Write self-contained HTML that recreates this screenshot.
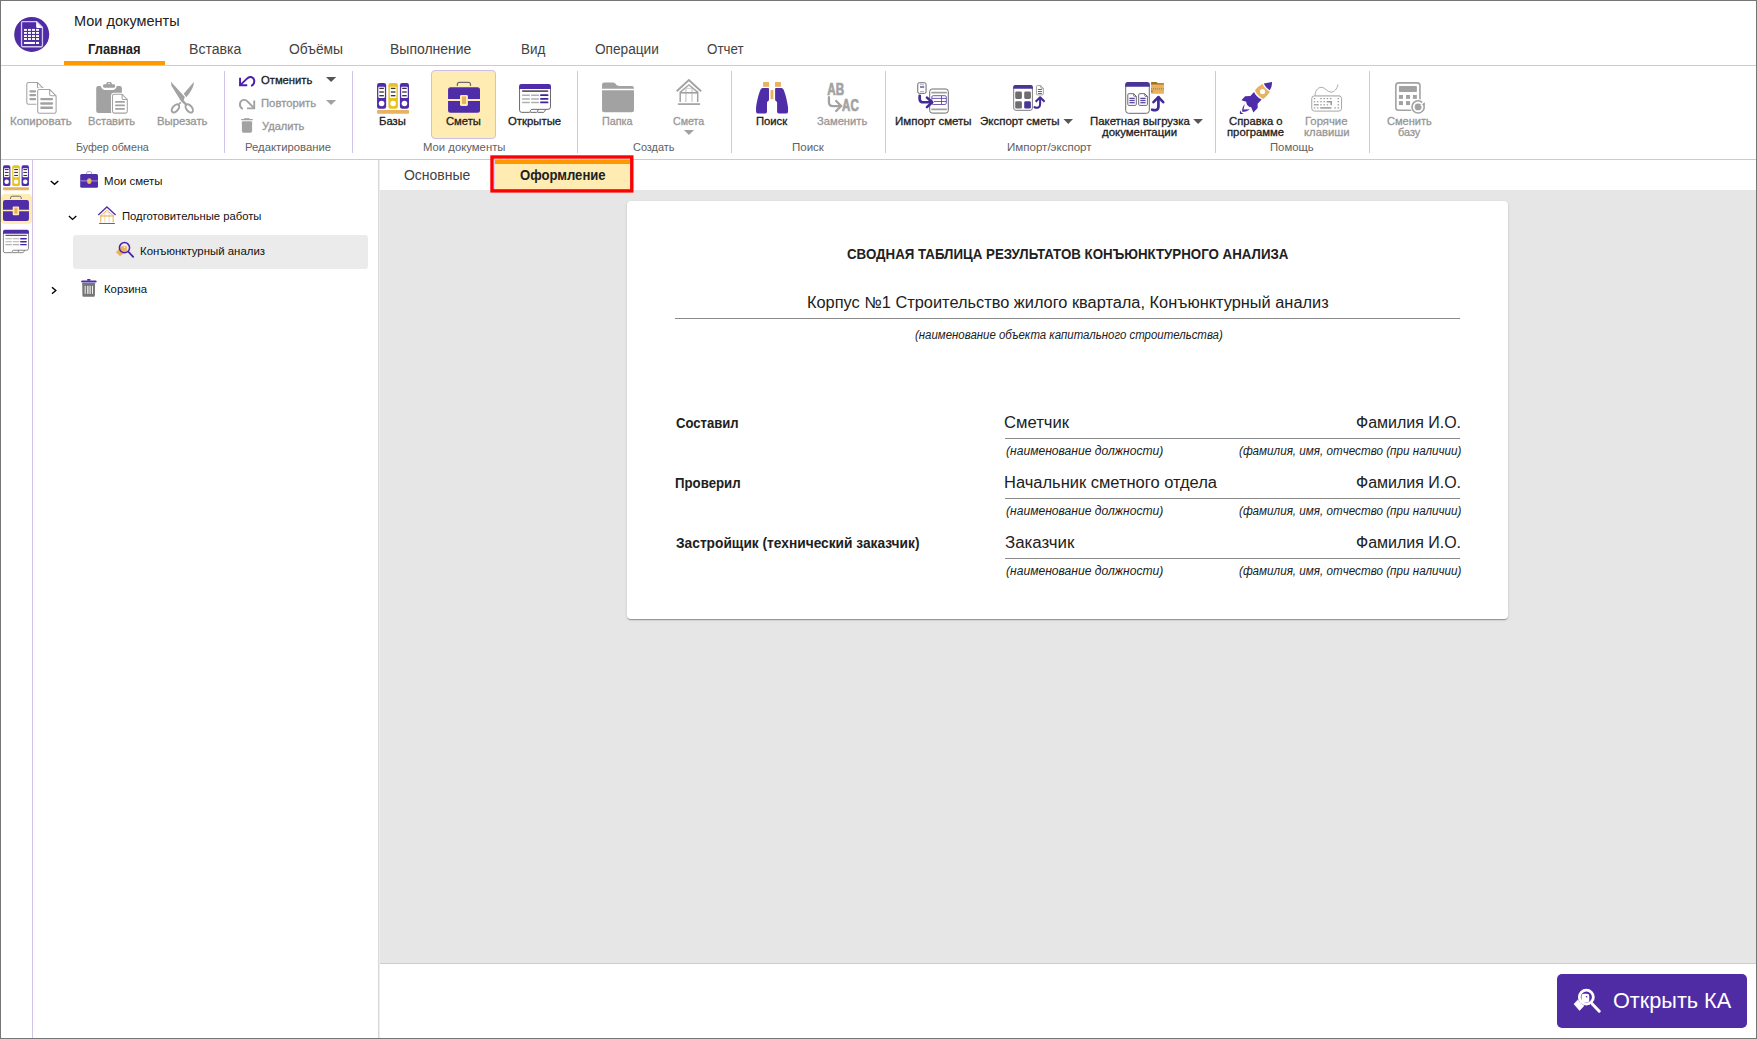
<!DOCTYPE html>
<html lang="ru"><head><meta charset="utf-8"><title>Мои документы</title><style>
html,body{margin:0;padding:0}
body{width:1757px;height:1039px;position:relative;overflow:hidden;background:#fff;font-family:"Liberation Sans",sans-serif;}
.a{position:absolute}
.layer{position:absolute;left:0;top:0;width:0;height:0}
.t{position:absolute;white-space:nowrap;line-height:1;transform-origin:0 0}
.m{-webkit-text-stroke:0.3px currentColor}
.hl{position:absolute;height:1px;background:#d1c4e9}
.vl{position:absolute;width:1px;background:#d1c4e9}
.ul{position:absolute;height:1px;background:#8a8a8a}
svg{position:absolute;left:0;top:0;overflow:visible}
button{position:absolute;border:0;padding:0;margin:0;font-family:inherit;text-align:left;overflow:visible}
.card{position:absolute;left:627px;top:201px;width:881px;height:418px;background:#fff;border-radius:4px;box-shadow:0 2px 1px -1px rgba(0,0,0,.2),0 1px 1px 0 rgba(0,0,0,.14),0 1px 3px 0 rgba(0,0,0,.12)}
</style></head><body>
<header class="layer titlebar">
<svg class="ic" width="1757" height="1039" viewBox="0 0 1757 1039"><circle cx="31.7" cy="34.45" r="17.5" fill="#4f2ca6"/><path d="M22.6,21.55 H36.7 L42.45,27.3 V45.6 Q42.45,46.75 41.3,46.75 H22.6 Q21.55,46.75 21.55,45.6 V22.7 Q21.55,21.55 22.6,21.55 Z" fill="none" stroke="#d3c9ec" stroke-width="1.3"/><path d="M36.2,21.6 L42.4,27.9 H37.2 Q36.2,27.9 36.2,26.9 Z" fill="#fff"/><rect x="23.98" y="28.94" width="2.96" height="1.9" fill="#fff"/><rect x="23.98" y="31.99" width="2.96" height="1.9" fill="#fff"/><rect x="23.98" y="35.08" width="2.96" height="1.9" fill="#fff"/><rect x="23.98" y="38.05" width="2.96" height="1.9" fill="#fff"/><rect x="28.0" y="28.94" width="2.96" height="1.9" fill="#fff"/><rect x="28.0" y="31.99" width="2.96" height="1.9" fill="#fff"/><rect x="28.0" y="35.08" width="2.96" height="1.9" fill="#fff"/><rect x="28.0" y="38.05" width="2.96" height="1.9" fill="#fff"/><rect x="32.02" y="28.94" width="2.96" height="1.9" fill="#fff"/><rect x="32.02" y="31.99" width="2.96" height="1.9" fill="#fff"/><rect x="32.02" y="35.08" width="2.96" height="1.9" fill="#fff"/><rect x="32.02" y="38.05" width="2.96" height="1.9" fill="#fff"/><rect x="36.05" y="28.94" width="2.96" height="1.9" fill="#fff"/><rect x="36.05" y="31.99" width="2.96" height="1.9" fill="#fff"/><rect x="36.05" y="35.08" width="2.96" height="1.9" fill="#fff"/><rect x="36.05" y="38.05" width="2.96" height="1.9" fill="#fff"/><rect x="23.98" y="41.95" width="11" height="2.05" fill="#fff"/><rect x="36.05" y="41.95" width="2.96" height="2.05" fill="#fff"/></svg>
<span class="t" style="left:74.26px;top:14px;font-size:14px;color:#212121;transform:scaleX(1.0356)">Мои документы</span>
</header>
<nav class="layer menu">
<div class="hl" style="left:1px;top:65px;width:1755px"></div>
<div class="a" style="left:64px;top:61px;width:101px;height:4px;background:#ff9900"></div>
<span class="t" style="left:88.48px;top:42px;font-size:14px;color:#212121;transform:scaleX(0.9236);font-weight:700">Главная</span>
<span class="t" style="left:189.39px;top:42px;font-size:14px;color:#424242;transform:scaleX(1.0078)">Вставка</span>
<span class="t" style="left:289.0px;top:42px;font-size:14px;color:#424242;transform:scaleX(0.9889)">Объёмы</span>
<span class="t" style="left:390.0px;top:42px;font-size:14px;color:#424242;transform:scaleX(0.9987)">Выполнение</span>
<span class="t" style="left:521.04px;top:42px;font-size:14px;color:#424242;transform:scaleX(0.96)">Вид</span>
<span class="t" style="left:595.2px;top:42px;font-size:14px;color:#424242;transform:scaleX(0.9754)">Операции</span>
<span class="t" style="left:706.5px;top:42px;font-size:14px;color:#424242;transform:scaleX(0.9538)">Отчет</span>
</nav>
<section class="layer ribbon">
<div class="hl" style="left:1px;top:159px;width:1755px"></div>
<div class="vl" style="left:224px;top:71px;height:82px"></div>
<div class="vl" style="left:352px;top:71px;height:82px"></div>
<div class="vl" style="left:577px;top:71px;height:82px"></div>
<div class="vl" style="left:731px;top:71px;height:82px"></div>
<div class="vl" style="left:885px;top:71px;height:82px"></div>
<div class="vl" style="left:1215px;top:71px;height:82px"></div>
<div class="vl" style="left:1369px;top:71px;height:82px"></div>
<div class="a" style="left:431px;top:70px;width:63px;height:67px;background:#ffecb3;border:1px solid #cdbfe8;border-radius:4px"></div>
<svg class="ic" width="1757" height="1039" viewBox="0 0 1757 1039"><path d="M28.6,82.55 H37.5 L43.1,88.15 V102.4 Q43.1,104.2 41.3,104.2 H28.6 Q26.8,104.2 26.8,102.4 V84.35 Q26.8,82.55 28.6,82.55 Z" fill="#fff" stroke="#a2a2a2" stroke-width="1.05" stroke-linejoin="round"/><path d="M37.5,82.55 V86.89 Q37.5,88.15 38.76,88.15 H43.1" fill="none" stroke="#a2a2a2" stroke-width="1.05"/><line x1="30.4" y1="91.3" x2="35.2" y2="91.3" stroke="#a2a2a2" stroke-width="2.2" stroke-linecap="round"/><line x1="30.4" y1="95.2" x2="35.2" y2="95.2" stroke="#a2a2a2" stroke-width="2.2" stroke-linecap="round"/><line x1="30.4" y1="99.1" x2="35.2" y2="99.1" stroke="#a2a2a2" stroke-width="2.2" stroke-linecap="round"/><path d="M39.5,89.4 H49.7 L56.1,95.8 V111.5 Q56.1,113.3 54.3,113.3 H39.5 Q37.7,113.3 37.7,111.5 V91.2 Q37.7,89.4 39.5,89.4 Z" fill="#fff" stroke="#fff" stroke-width="2.6" stroke-linejoin="round"/><path d="M49.7,89.4 V94.54 Q49.7,95.8 50.96,95.8 H56.1" fill="none" stroke="#fff" stroke-width="2.6"/><path d="M39.5,89.4 H49.7 L56.1,95.8 V111.5 Q56.1,113.3 54.3,113.3 H39.5 Q37.7,113.3 37.7,111.5 V91.2 Q37.7,89.4 39.5,89.4 Z" fill="#fff" stroke="#a2a2a2" stroke-width="1.05" stroke-linejoin="round"/><path d="M49.7,89.4 V94.54 Q49.7,95.8 50.96,95.8 H56.1" fill="none" stroke="#a2a2a2" stroke-width="1.05"/><line x1="41.4" y1="99.1" x2="51.9" y2="99.1" stroke="#a2a2a2" stroke-width="2.4" stroke-linecap="round"/><line x1="41.4" y1="103.5" x2="51.9" y2="103.5" stroke="#a2a2a2" stroke-width="2.4" stroke-linecap="round"/><line x1="41.4" y1="107.8" x2="51.9" y2="107.8" stroke="#a2a2a2" stroke-width="2.4" stroke-linecap="round"/>
<rect x="96.2" y="85.9" width="25.7" height="27" rx="2.2" fill="#a2a2a2"/><path d="M100.5,85.5 C101.91,89.34 103.13,89.95 105.55,89.95 L112.02,89.95 C114.65,89.95 115.66,89.34 117.07,85.5 Z" fill="#fff"/><path d="M104.34,84.29 L106.16,84.29 C106.56,82.06 107.17,81.98 108.99,81.98 C111.01,81.98 111.61,82.06 112.02,84.29 L113.84,84.29 Q115.25,84.29 115.25,85.9 Q115.25,87.72 113.84,87.72 L104.34,87.72 Q102.92,87.72 102.92,85.9 Q102.92,84.29 104.34,84.29 Z" fill="#a2a2a2"/><ellipse cx="109.07" cy="83.6" rx="1" ry="0.6" fill="#fff"/><path d="M114.3,94.3 H122.1 L127.3,99.5 V111.3 Q127.3,113.1 125.5,113.1 H114.3 Q112.5,113.1 112.5,111.3 V96.1 Q112.5,94.3 114.3,94.3 Z" fill="#fff" stroke="#fff" stroke-width="3.0" stroke-linejoin="round"/><path d="M122.1,94.3 V98.24 Q122.1,99.5 123.36,99.5 H127.3" fill="none" stroke="#fff" stroke-width="3.0"/><path d="M114.3,94.3 H122.1 L127.3,99.5 V111.3 Q127.3,113.1 125.5,113.1 H114.3 Q112.5,113.1 112.5,111.3 V96.1 Q112.5,94.3 114.3,94.3 Z" fill="#fff" stroke="#a2a2a2" stroke-width="1.05" stroke-linejoin="round"/><path d="M122.1,94.3 V98.24 Q122.1,99.5 123.36,99.5 H127.3" fill="none" stroke="#a2a2a2" stroke-width="1.05"/><line x1="115.9" y1="101.9" x2="124.1" y2="101.9" stroke="#a2a2a2" stroke-width="1.8" stroke-linecap="round"/><line x1="115.9" y1="105.4" x2="124.1" y2="105.4" stroke="#a2a2a2" stroke-width="1.8" stroke-linecap="round"/><line x1="115.9" y1="108.8" x2="124.1" y2="108.8" stroke="#a2a2a2" stroke-width="1.8" stroke-linecap="round"/>
<polygon points="170.94,81.86 184.85,97.1 183.64,100.17 187.07,103.89 185.25,105.18 181.01,101.14 171.43,85.7" fill="#a2a2a2"/><path d="M193.82,81.98 C194.35,85.3 190.91,92.17 186.26,97.34 L183.76,93.66 Z" fill="#a2a2a2"/><line x1="178.78" y1="104.09" x2="180.89" y2="102.48" stroke="#a2a2a2" stroke-width="1.6"/><ellipse cx="175.43" cy="108.42" rx="4.75" ry="2.8" transform="rotate(-50 175.43 108.42)" fill="none" stroke="#a2a2a2" stroke-width="2.0"/><ellipse cx="189.21" cy="108.42" rx="4.75" ry="2.8" transform="rotate(52 189.21 108.42)" fill="none" stroke="#a2a2a2" stroke-width="2.0"/>
<path d="M240.04,77.76 L240.04,85.26 L247.22,85.26" fill="none" stroke="#4a1fb0" stroke-width="1.9" stroke-linecap="butt"/><path d="M240.23,85.07 L246.71,78.9 C249.26,76.04 253.07,76.36 254.22,80.17 C254.66,82.71 253.39,84.62 251.8,85.58" fill="none" stroke="#4a1fb0" stroke-width="1.9" stroke-linecap="round"/>
<path d="M254.22,100.39 L254.22,108.33 L247.03,108.33" fill="none" stroke="#a2a2a2" stroke-width="1.9"/><path d="M254.03,108.14 L247.67,101.6 C245.44,98.93 241.31,99.24 240.04,103.06 C239.59,105.6 240.36,107.51 242.14,108.59" fill="none" stroke="#a2a2a2" stroke-width="1.9" stroke-linecap="round"/>
<rect x="241.9" y="121.5" width="10.2" height="11.2" rx="1.6" fill="#a2a2a2"/><rect x="241.9" y="121.5" width="10.2" height="3" fill="#a2a2a2"/><line x1="241.2" y1="119.6" x2="252.8" y2="119.6" stroke="#a2a2a2" stroke-width="1.3" stroke-linecap="butt"/><line x1="244.2" y1="118.7" x2="249.6" y2="118.7" stroke="#a2a2a2" stroke-width="1.0" stroke-linecap="butt"/>
<polygon points="326,77 336.2,77 331.1,82" fill="#555"/>
<polygon points="326,100 336.2,100 331.1,105" fill="#a2a2a2"/>
<g transform="translate(0 0) scale(1)"><rect x="377.05" y="83.05" width="9.1" height="25.65" rx="2.3" fill="#4f2da8"/><rect x="378.3" y="86.7" width="6.6" height="11.3" rx="1" fill="#fff"/><line x1="379.3" y1="88.4" x2="383.9" y2="88.4" stroke="#3a3a3a" stroke-width="1.35" stroke-linecap="butt"/><line x1="379.3" y1="92" x2="383.9" y2="92" stroke="#3a3a3a" stroke-width="1.35" stroke-linecap="butt"/><line x1="379.3" y1="95.7" x2="383.9" y2="95.7" stroke="#3a3a3a" stroke-width="1.35" stroke-linecap="butt"/><circle cx="381.6" cy="103.5" r="2.8" fill="#fff"/><rect x="388.4" y="83.05" width="9.5" height="25.65" rx="2.3" fill="#eac21f"/><rect x="389.85" y="86.7" width="6.6" height="11.3" rx="1" fill="#fff"/><line x1="390.85" y1="88.4" x2="395.45" y2="88.4" stroke="#3a3a3a" stroke-width="1.35" stroke-linecap="butt"/><line x1="390.85" y1="92" x2="395.45" y2="92" stroke="#3a3a3a" stroke-width="1.35" stroke-linecap="butt"/><line x1="390.85" y1="95.7" x2="395.45" y2="95.7" stroke="#3a3a3a" stroke-width="1.35" stroke-linecap="butt"/><circle cx="393.15" cy="103.5" r="2.8" fill="#fff"/><rect x="399.9" y="83.05" width="9.1" height="25.65" rx="2.3" fill="#4f2da8"/><rect x="401.15" y="86.7" width="6.6" height="11.3" rx="1" fill="#fff"/><line x1="402.15" y1="88.4" x2="406.75" y2="88.4" stroke="#3a3a3a" stroke-width="1.35" stroke-linecap="butt"/><line x1="402.15" y1="92" x2="406.75" y2="92" stroke="#3a3a3a" stroke-width="1.35" stroke-linecap="butt"/><line x1="402.15" y1="95.7" x2="406.75" y2="95.7" stroke="#3a3a3a" stroke-width="1.35" stroke-linecap="butt"/><circle cx="404.45" cy="103.5" r="2.8" fill="#fff"/><rect x="377.05" y="110.1" width="31.95" height="3.7" rx="0.8" fill="#e8b25e"/></g>
<g transform="translate(0 0) scale(1)"><path d="M457.35,85.9 V84.4 Q457.35,82.4 459.35,82.4 H468.5 Q470.5,82.4 470.5,84.4 V85.9" fill="none" stroke="#6b6b6b" stroke-width="1.2"/><path d="M450.55,87.2 H477.5 Q480,87.2 480,89.7 V99 H448.05 V89.7 Q448.05,87.2 450.55,87.2 Z" fill="#4f2da8"/><path d="M448.05,101.05 H480 V110.35 Q480,112.85 477.5,112.85 H450.55 Q448.05,112.85 448.05,110.35 Z" fill="#4f2da8"/><rect x="460" y="95" width="7.9" height="10.9" rx="1.3" fill="#ffecb3"/><rect x="462" y="96.4" width="4" height="7.5" fill="#e8b25e"/></g>
<g transform="translate(0 0) scale(1)"><path d="M519.55,88 V110.2 Q519.55,112.35 521.7,112.35 H529.2 Q530.1,112.35 530.3,111.4 L530.6,110.3 Q530.9,109.35 532,109.35 H548 Q550.5,109.35 550.5,106.9 V88" fill="#fff" stroke="#6a6a6a" stroke-width="1"/><path d="M530.4,112.35 H536.4 Q537.2,112.35 537.5,111.5 L538.3,109.35 M537.6,112.35 H543.3 Q544.2,112.35 544.6,111.5 L545.6,109.35" fill="none" stroke="#6a6a6a" stroke-width="1"/><path d="M519.05,88.9 V86.3 Q519.05,84.06 521.3,84.06 H548.75 Q551,84.06 551,86.3 V88.9 Z" fill="#4f2da8"/><line x1="522.7" y1="91.1" x2="547.6" y2="91.1" stroke="#5c5c5c" stroke-width="1.6" stroke-linecap="round"/><line x1="522.6" y1="95.2" x2="529.3" y2="95.2" stroke="#b0b0b0" stroke-width="1.5" stroke-linecap="round"/><line x1="531.7" y1="95.2" x2="538.4" y2="95.2" stroke="#b0b0b0" stroke-width="1.5" stroke-linecap="round"/><line x1="540.9" y1="95.2" x2="547.6" y2="95.2" stroke="#4322a0" stroke-width="1.7" stroke-linecap="round"/><line x1="522.6" y1="98.9" x2="529.3" y2="98.9" stroke="#b0b0b0" stroke-width="1.5" stroke-linecap="round"/><line x1="531.7" y1="98.9" x2="538.4" y2="98.9" stroke="#b0b0b0" stroke-width="1.5" stroke-linecap="round"/><line x1="540.9" y1="98.9" x2="547.6" y2="98.9" stroke="#4322a0" stroke-width="1.7" stroke-linecap="round"/><line x1="522.6" y1="102.45" x2="529.3" y2="102.45" stroke="#b0b0b0" stroke-width="1.5" stroke-linecap="round"/><line x1="531.7" y1="102.45" x2="538.4" y2="102.45" stroke="#b0b0b0" stroke-width="1.5" stroke-linecap="round"/><line x1="540.9" y1="102.45" x2="547.6" y2="102.45" stroke="#4322a0" stroke-width="1.7" stroke-linecap="round"/></g>
<path d="M602.05,88.85 L602.05,84.29 Q602.05,82.39 604.07,82.39 L612.76,82.39 C616,82.39 615.59,85.9 619.64,85.9 L631.76,85.9 Q633.98,85.9 633.98,88.13 L633.98,88.85 Z" fill="#a2a2a2"/><path d="M602.05,90.35 L633.98,90.35 L633.98,110.16 Q633.98,112.18 631.96,112.18 L604.07,112.18 Q602.05,112.18 602.05,110.16 Z" fill="#a2a2a2"/>
<g transform="translate(0 0) scale(1)"><line x1="685.9" y1="89" x2="685.9" y2="101.9" stroke="#cfcfcf" stroke-width="1.4"/><line x1="692" y1="89" x2="692" y2="101.9" stroke="#cfcfcf" stroke-width="1.4"/><line x1="685.9" y1="88.3" x2="692" y2="88.3" stroke="#cfcfcf" stroke-width="1"/><polyline points="680.1,92.4 688.9,84.8 697.8,92.4" fill="none" stroke="#a2a2a2" stroke-width="1.4"/><line x1="680.1" y1="92.8" x2="697.9" y2="92.8" stroke="#a2a2a2" stroke-width="1.6"/><line x1="680.2" y1="91.8" x2="680.2" y2="101.9" stroke="#a2a2a2" stroke-width="1.5"/><line x1="697.7" y1="91.8" x2="697.7" y2="101.9" stroke="#a2a2a2" stroke-width="1.5"/><polyline points="676.7,91.3 688.85,80.0 701.1,91.3" fill="none" stroke="#a2a2a2" stroke-width="1.85"/><line x1="677.9" y1="104.1" x2="700.1" y2="104.1" stroke="#a2a2a2" stroke-width="1.7"/></g>
<polygon points="683.9,130 694,130 688.95,135" fill="#a2a2a2"/>
<rect x="763.1" y="82.06" width="5.9" height="4.75" fill="#e8b25e"/><rect x="775" y="82.06" width="5.9" height="4.75" fill="#e8b25e"/><rect x="770.5" y="89.9" width="2.9" height="9.3" rx="0.6" fill="#e8b25e"/><path d="M762.6,88.1 H768.2 Q769,88.1 769,88.9 V99.6 Q769,100.9 768,101.2 Q767,101.5 767,102.6 V111.4 Q767,113.6 764.8,113.6 H758.3 Q756.05,113.6 756.05,111.4 V107.5 C757.2,99 759.3,92.5 760.6,89.6 Q761.3,88.1 762.6,88.1 Z" fill="#4f2da8"/><g transform="translate(1544.1 0) scale(-1 1)"><path d="M762.6,88.1 H768.2 Q769,88.1 769,88.9 V99.6 Q769,100.9 768,101.2 Q767,101.5 767,102.6 V111.4 Q767,113.6 764.8,113.6 H758.3 Q756.05,113.6 756.05,111.4 V107.5 C757.2,99 759.3,92.5 760.6,89.6 Q761.3,88.1 762.6,88.1 Z" fill="#4f2da8"/></g>
<text x="827.3" y="94.5" font-family="Liberation Sans, sans-serif" font-weight="700" font-size="15.8" fill="#a2a2a2" stroke="#a2a2a2" stroke-width="0.7" textLength="16.8" lengthAdjust="spacingAndGlyphs">AB</text><text x="842.1" y="111.4" font-family="Liberation Sans, sans-serif" font-weight="700" font-size="15.8" fill="#a2a2a2" stroke="#a2a2a2" stroke-width="0.7" textLength="16.6" lengthAdjust="spacingAndGlyphs">AC</text><path d="M828.95,97.22 L828.95,102.27 Q828.95,106.11 832.91,106.11 L840.8,106.11" fill="none" stroke="#a2a2a2" stroke-width="2.3" stroke-linecap="round"/><path d="M836.15,101.06 L841.08,106.03 L836.15,110.96" fill="none" stroke="#a2a2a2" stroke-width="2.3" stroke-linecap="round" stroke-linejoin="miter"/>
<rect x="917.75" y="82.75" width="8.3" height="10.6" rx="1.5" fill="#fff" stroke="#6a6a6e" stroke-width="1"/><line x1="920" y1="84.7" x2="924" y2="84.7" stroke="#b0b0b0" stroke-width="0.9" stroke-linecap="butt"/><line x1="920" y1="87" x2="924.2" y2="87" stroke="#6a55b0" stroke-width="1.5" stroke-linecap="butt"/><line x1="920" y1="91.5" x2="924" y2="91.5" stroke="#b0b0b0" stroke-width="0.9" stroke-linecap="butt"/><rect x="929.7" y="89" width="18.6" height="24.1" rx="2.6" fill="#fff" stroke="#6a6a6e" stroke-width="1"/><line x1="931.5" y1="89.3" x2="946.3" y2="89.3" stroke="#b5b5b5" stroke-width="1.2" stroke-linecap="butt"/><line x1="932" y1="92.6" x2="946.2" y2="92.6" stroke="#a0a0a0" stroke-width="1.7" stroke-linecap="round"/><line x1="932" y1="109.35" x2="946.2" y2="109.35" stroke="#a0a0a0" stroke-width="1.7" stroke-linecap="round"/><rect x="931.8" y="95.7" width="14.5" height="8.8" rx="1.4" fill="none" stroke="#6247ae" stroke-width="0.9"/><path d="M931.8,98.4 H946.3 M934,101.5 H946.3 M941.5,95.7 V104.5" fill="none" stroke="#6247ae" stroke-width="0.9"/><path d="M919.68,95.81 L919.68,98.64 Q919.68,102.27 923.72,102.27 L931.81,102.27" fill="none" stroke="#432b96" stroke-width="2.7" stroke-linecap="round"/><path d="M926.96,97.62 L932.21,102.27 L926.96,107.12" fill="none" stroke="#432b96" stroke-width="2.6" stroke-linecap="round" stroke-linejoin="round"/>
<rect x="1013.7" y="85.6" width="18.7" height="24.7" rx="2.2" fill="#fff" stroke="#7a7a7a" stroke-width="1"/><path d="M1013.2,88.7 V87.3 Q1013.2,85.1 1015.4,85.1 H1030.7 Q1032.9,85.1 1032.9,87.3 V88.7 Z" fill="#4a3596"/><rect x="1015.2" y="91.6" width="6.7" height="7.3" rx="1.4" fill="#6e6b72"/><rect x="1024.2" y="91.6" width="6.7" height="7.3" rx="1.4" fill="#6e6b72"/><rect x="1015.2" y="101.3" width="6.7" height="7.3" rx="1.4" fill="#6e6b72"/><rect x="1024.2" y="101.3" width="6.7" height="7.3" rx="1.4" fill="#4a3596"/><path d="M1037.4,85.6 H1040.7 L1043.3,88.2 V93.9 Q1043.3,94.9 1042.3,94.9 H1037.4 Q1036.4,94.9 1036.4,93.9 V86.6 Q1036.4,85.6 1037.4,85.6 Z" fill="#fff" stroke="#a0a0a0" stroke-width="1.0" stroke-linejoin="round"/><path d="M1040.7,85.6 V87.5 Q1040.7,88.2 1041.4,88.2 H1043.3" fill="none" stroke="#a0a0a0" stroke-width="1.0"/><line x1="1037.9" y1="89.5" x2="1041.9" y2="89.5" stroke="#6a55b0" stroke-width="1.0" stroke-linecap="butt"/><line x1="1037.9" y1="91.5" x2="1041.9" y2="91.5" stroke="#6a55b0" stroke-width="1.0" stroke-linecap="butt"/><line x1="1037.9" y1="93.4" x2="1041.9" y2="93.4" stroke="#6a55b0" stroke-width="1.0" stroke-linecap="butt"/><path d="M1034.48,107.2 C1037.1,108.34 1040.13,107.93 1040.13,103.89 L1040.13,98.03" fill="none" stroke="#432b96" stroke-width="2.1" stroke-linecap="round"/><path d="M1035.69,101.67 L1040.13,97.34 L1044.58,101.67" fill="none" stroke="#432b96" stroke-width="2.1" stroke-linecap="butt" stroke-linejoin="round"/>
<polygon points="1063.5,119 1073,119 1068.25,124" fill="#555"/>
<rect x="1125.7" y="82.6" width="23.6" height="30.7" rx="2.8" fill="#fff" stroke="#6a6a6e" stroke-width="1"/><path d="M1125.2,86.7 V84.9 Q1125.2,82.07 1128,82.07 H1147 Q1149.8,82.07 1149.8,84.9 V86.7 Z" fill="#4a3596"/><path d="M1128.8,93.7 H1133.7 L1136.3,96.3 V104.4 Q1136.3,105.4 1135.3,105.4 H1128.8 Q1127.8,105.4 1127.8,104.4 V94.7 Q1127.8,93.7 1128.8,93.7 Z" fill="#fff" stroke="#6a6a6e" stroke-width="1.0" stroke-linejoin="round"/><path d="M1133.7,93.7 V95.6 Q1133.7,96.3 1134.4,96.3 H1136.3" fill="none" stroke="#6a6a6e" stroke-width="1.0"/><path d="M1139.7,93.7 H1144.8 L1147.4,96.3 V104.4 Q1147.4,105.4 1146.4,105.4 H1139.7 Q1138.7,105.4 1138.7,104.4 V94.7 Q1138.7,93.7 1139.7,93.7 Z" fill="#fff" stroke="#6a6a6e" stroke-width="1.0" stroke-linejoin="round"/><path d="M1144.8,93.7 V95.6 Q1144.8,96.3 1145.5,96.3 H1147.4" fill="none" stroke="#6a6a6e" stroke-width="1.0"/><line x1="1129.4" y1="98.4" x2="1134.7" y2="98.4" stroke="#5a45a4" stroke-width="1.3" stroke-linecap="butt"/><line x1="1140.3" y1="98.4" x2="1145.6" y2="98.4" stroke="#5a45a4" stroke-width="1.3" stroke-linecap="butt"/><line x1="1129.4" y1="100.5" x2="1134.7" y2="100.5" stroke="#5a45a4" stroke-width="1.3" stroke-linecap="butt"/><line x1="1140.3" y1="100.5" x2="1145.6" y2="100.5" stroke="#5a45a4" stroke-width="1.3" stroke-linecap="butt"/><line x1="1129.4" y1="102.7" x2="1134.7" y2="102.7" stroke="#5a45a4" stroke-width="1.3" stroke-linecap="butt"/><line x1="1140.3" y1="102.7" x2="1145.6" y2="102.7" stroke="#5a45a4" stroke-width="1.3" stroke-linecap="butt"/><path d="M1151.1,93.8 V83 Q1151.1,82.07 1152,82.07 H1156 Q1156.8,82.07 1157.2,82.7 L1157.6,83.2 H1163.9 V93.8 Z" fill="#e8b25e"/><path d="M1151.1,84.6 V83 Q1151.1,82.07 1152,82.07 H1156 Q1156.8,82.07 1157.2,82.7 L1157.6,83.2 H1163.9 V84.6 Z" fill="#9a7224"/><line x1="1151.1" y1="88.9" x2="1163.9" y2="88.9" stroke="#8a8172" stroke-width="1.1" stroke-dasharray="1 1"/><rect x="1151.1" y="90.3" width="1.6" height="2" fill="#8a8172"/><path d="M1152.15,109.64 C1155.18,110.78 1158.41,110.37 1158.41,106.13 L1158.41,97.63" fill="none" stroke="#432b96" stroke-width="2.7" stroke-linecap="round"/><path d="M1153.48,102.2 L1158.41,97.03 L1163.19,102.2" fill="none" stroke="#432b96" stroke-width="2.6" stroke-linecap="round" stroke-linejoin="round"/>
<polygon points="1193.2,119 1203,119 1198.1,124" fill="#555"/>
<path d="M1263.78,83.48 L1272.07,81.9 C1271.98,85.3 1271.38,87.72 1269.76,90.23 C1267.34,88.93 1265.32,86.51 1263.78,83.48 Z" fill="#4f2da8"/><path d="M1254.93,90.43 C1257.23,87.32 1259.66,85.3 1262.69,83.96 C1264.1,87.32 1266.53,89.95 1269.92,91.48 C1268.55,94.19 1266.12,97.02 1263.29,98.92 C1259.66,97.02 1256.83,94.19 1254.93,90.43 Z" fill="#e8b25e"/><circle cx="1262.49" cy="91.56" r="2.65" fill="#fff"/><path d="M1254,92.09 C1255.61,95.4 1258.44,98.23 1261.68,99.57 L1257.64,103.69 L1257.64,107.93 L1253.39,112.58 L1251.17,107.33 C1248.34,107.12 1246.32,105.1 1246.24,101.87 L1241.39,100.37 L1245.11,96.21 L1250.36,96.01 Z" fill="#4f2da8"/><path d="M1244.7,104.09 L1243.57,109.47 L1249.96,109.14 C1247.93,110.76 1244.7,111.97 1242.19,111.77 C1241.67,109.55 1243.08,105.91 1244.7,104.09 Z" fill="#4f2da8"/><path d="M1240.25,110.16 C1240.66,111.97 1241.87,113.19 1243.81,113.59 C1242.28,114.2 1240.66,114.2 1239.93,113.91 C1239.77,112.78 1239.85,111.17 1240.25,110.16 Z" fill="#4f2da8"/>
<rect x="1311.75" y="95.9" width="29.8" height="15.2" rx="2.6" fill="#fff" stroke="#a6a6a6" stroke-width="1"/><line x1="1314" y1="95.7" x2="1340" y2="95.7" stroke="#c4c4c4" stroke-width="1.2" stroke-linecap="butt"/><path d="M1315.09,95.6 C1315.09,89.34 1319.34,86.91 1322.17,87.32 C1325,87.72 1327.83,92.17 1331.06,92.17 C1334.29,92.17 1337.12,88.93 1337.93,84.57" fill="none" stroke="#a0a0a0" stroke-width="0.9"/><rect x="1313.75" y="98" width="1.5" height="1.2" fill="#9a9a9a"/><rect x="1320.25" y="98" width="1.5" height="1.2" fill="#9a9a9a"/><rect x="1323.45" y="98" width="1.5" height="1.2" fill="#9a9a9a"/><rect x="1326.65" y="98" width="1.5" height="1.2" fill="#9a9a9a"/><rect x="1329.95" y="98" width="1.5" height="1.2" fill="#9a9a9a"/><rect x="1337.55" y="98" width="1.5" height="1.2" fill="#9a9a9a"/><rect x="1313.75" y="101.1" width="1.5" height="1.2" fill="#9a9a9a"/><rect x="1316.95" y="101.1" width="1.5" height="1.2" fill="#9a9a9a"/><rect x="1320.25" y="101.1" width="1.5" height="1.2" fill="#9a9a9a"/><rect x="1323.45" y="101.1" width="1.5" height="1.2" fill="#9a9a9a"/><rect x="1337.55" y="101.1" width="1.5" height="1.2" fill="#9a9a9a"/><rect x="1320.25" y="104.2" width="1.5" height="1.2" fill="#9a9a9a"/><rect x="1323.45" y="104.2" width="1.5" height="1.2" fill="#9a9a9a"/><rect x="1326.65" y="104.2" width="1.5" height="1.2" fill="#9a9a9a"/><rect x="1337.55" y="104.2" width="1.5" height="1.2" fill="#9a9a9a"/><rect x="1313.75" y="107.3" width="1.5" height="1.2" fill="#9a9a9a"/><rect x="1316.95" y="107.3" width="1.5" height="1.2" fill="#9a9a9a"/><rect x="1334.35" y="107.3" width="1.5" height="1.2" fill="#9a9a9a"/><rect x="1337.55" y="107.3" width="1.5" height="1.2" fill="#9a9a9a"/><path d="M1326.6,101.7 H1331.2 V105.2" fill="none" stroke="#9a9a9a" stroke-width="1.5"/><line x1="1313.8" y1="104.8" x2="1318.8" y2="104.8" stroke="#9a9a9a" stroke-width="1.3" stroke-linecap="butt"/><line x1="1320.2" y1="107.9" x2="1331.4" y2="107.9" stroke="#9a9a9a" stroke-width="1.5" stroke-linecap="butt"/>
<rect x="1395.85" y="82.85" width="24.1" height="27.4" rx="2.8" fill="#fff" stroke="#a2a2a2" stroke-width="1.6"/><rect x="1398.9" y="86.1" width="18" height="5.9" rx="0.8" fill="#a2a2a2"/><rect x="1398.9" y="95" width="4.05" height="3.85" fill="#a2a2a2"/><rect x="1406" y="95" width="4.05" height="3.85" fill="#a2a2a2"/><rect x="1412.85" y="95" width="4.05" height="3.85" fill="#a2a2a2"/><rect x="1398.9" y="101.06" width="4.05" height="4" fill="#a2a2a2"/><rect x="1406" y="101.06" width="4.05" height="4" fill="#a2a2a2"/><circle cx="1418.1" cy="106.9" r="7.9" fill="#fff"/><circle cx="1418.1" cy="106.9" r="6.1" fill="#fff" stroke="#a2a2a2" stroke-width="1.6"/><circle cx="1418.1" cy="106.9" r="3.4" fill="#a2a2a2"/><path d="M1420.3,106.2 L1425,103.3 L1422.5,101.5 Z" fill="#fff"/><path d="M1421.7,104.6 L1424.9,102.3 L1424.9,105.6 Z" fill="#a2a2a2"/></svg>
<span class="t m" style="left:9.8px;top:116px;font-size:11px;color:#979797;transform:scaleX(1.0424)">Копировать</span>
<span class="t m" style="left:87.7px;top:116px;font-size:11px;color:#979797;transform:scaleX(1.0106)">Вставить</span>
<span class="t m" style="left:157.1px;top:116px;font-size:11px;color:#979797;transform:scaleX(1.0327)">Вырезать</span>
<span class="t" style="left:75.53px;top:142px;font-size:11px;color:#616161;transform:scaleX(0.9743)">Буфер обмена</span>
<span class="t m" style="left:261.1px;top:75px;font-size:11px;color:#212121;transform:scaleX(1.022)">Отменить</span>
<span class="t m" style="left:261.1px;top:98px;font-size:11px;color:#979797;transform:scaleX(1.0259)">Повторить</span>
<span class="t m" style="left:261.6px;top:121px;font-size:11px;color:#979797;transform:scaleX(1.0095)">Удалить</span>
<span class="t" style="left:245.17px;top:142px;font-size:11px;color:#616161;transform:scaleX(1.0277)">Редактирование</span>
<span class="t m" style="left:379.0px;top:116px;font-size:11px;color:#212121;transform:scaleX(1.0231)">Базы</span>
<span class="t m" style="left:446.2px;top:116px;font-size:11px;color:#212121;transform:scaleX(1.0206)">Сметы</span>
<span class="t m" style="left:507.5px;top:116px;font-size:11px;color:#212121;transform:scaleX(1.0327)">Открытые</span>
<span class="t" style="left:423.07px;top:142px;font-size:11px;color:#616161;transform:scaleX(1.0291)">Мои документы</span>
<span class="t m" style="left:601.8px;top:116px;font-size:11px;color:#979797;transform:scaleX(0.9813)">Папка</span>
<span class="t m" style="left:672.5px;top:116px;font-size:11px;color:#979797;transform:scaleX(0.9667)">Смета</span>
<span class="t" style="left:633.4px;top:142px;font-size:11px;color:#616161;transform:scaleX(0.9929)">Создать</span>
<span class="t m" style="left:755.6px;top:116px;font-size:11px;color:#212121;transform:scaleX(1.0226)">Поиск</span>
<span class="t m" style="left:817.1px;top:116px;font-size:11px;color:#979797;transform:scaleX(1.016)">Заменить</span>
<span class="t" style="left:792.15px;top:142px;font-size:11px;color:#616161;transform:scaleX(1.0467)">Поиск</span>
<span class="t m" style="left:894.7px;top:116px;font-size:11px;color:#212121;transform:scaleX(1.0452)">Импорт сметы</span>
<span class="t m" style="left:980.1px;top:116px;font-size:11px;color:#212121;transform:scaleX(1.0447)">Экспорт сметы</span>
<span class="t m" style="left:1089.6px;top:116px;font-size:11px;color:#212121;transform:scaleX(1.0351)">Пакетная выгрузка</span>
<span class="t m" style="left:1102.4px;top:127px;font-size:11px;color:#212121;transform:scaleX(1.0389)">документации</span>
<span class="t" style="left:1007.45px;top:142px;font-size:11px;color:#616161;transform:scaleX(1.05)">Импорт/экспорт</span>
<span class="t m" style="left:1228.9px;top:116px;font-size:11px;color:#212121;transform:scaleX(1.0231)">Справка о</span>
<span class="t m" style="left:1226.6px;top:127px;font-size:11px;color:#212121;transform:scaleX(1.025)">программе</span>
<span class="t m" style="left:1305.4px;top:116px;font-size:11px;color:#979797;transform:scaleX(1.0293)">Горячие</span>
<span class="t m" style="left:1304.0px;top:127px;font-size:11px;color:#979797;transform:scaleX(1.025)">клавиши</span>
<span class="t" style="left:1270.47px;top:142px;font-size:11px;color:#616161;transform:scaleX(1.0268)">Помощь</span>
<span class="t m" style="left:1386.8px;top:116px;font-size:11px;color:#979797;transform:scaleX(1.0044)">Сменить</span>
<span class="t m" style="left:1397.9px;top:127px;font-size:11px;color:#979797;transform:scaleX(1.0)">базу</span>
</section>
<aside class="layer sidebar">
<div class="vl" style="left:32px;top:160px;height:878px"></div>
<div class="a" style="left:1px;top:194px;width:31px;height:30px;background:#ffecb3;border-radius:4px"></div>
<svg class="ic" width="1757" height="1039" viewBox="0 0 1757 1039"><g transform="translate(-303.35312500000003 97.721875) scale(0.8125)"><rect x="377.05" y="83.05" width="9.1" height="25.65" rx="2.3" fill="#4f2da8"/><rect x="378.3" y="86.7" width="6.6" height="11.3" rx="1" fill="#fff"/><line x1="379.3" y1="88.4" x2="383.9" y2="88.4" stroke="#3a3a3a" stroke-width="1.35" stroke-linecap="butt"/><line x1="379.3" y1="92" x2="383.9" y2="92" stroke="#3a3a3a" stroke-width="1.35" stroke-linecap="butt"/><line x1="379.3" y1="95.7" x2="383.9" y2="95.7" stroke="#3a3a3a" stroke-width="1.35" stroke-linecap="butt"/><circle cx="381.6" cy="103.5" r="2.8" fill="#fff"/><rect x="388.4" y="83.05" width="9.5" height="25.65" rx="2.3" fill="#eac21f"/><rect x="389.85" y="86.7" width="6.6" height="11.3" rx="1" fill="#fff"/><line x1="390.85" y1="88.4" x2="395.45" y2="88.4" stroke="#3a3a3a" stroke-width="1.35" stroke-linecap="butt"/><line x1="390.85" y1="92" x2="395.45" y2="92" stroke="#3a3a3a" stroke-width="1.35" stroke-linecap="butt"/><line x1="390.85" y1="95.7" x2="395.45" y2="95.7" stroke="#3a3a3a" stroke-width="1.35" stroke-linecap="butt"/><circle cx="393.15" cy="103.5" r="2.8" fill="#fff"/><rect x="399.9" y="83.05" width="9.1" height="25.65" rx="2.3" fill="#4f2da8"/><rect x="401.15" y="86.7" width="6.6" height="11.3" rx="1" fill="#fff"/><line x1="402.15" y1="88.4" x2="406.75" y2="88.4" stroke="#3a3a3a" stroke-width="1.35" stroke-linecap="butt"/><line x1="402.15" y1="92" x2="406.75" y2="92" stroke="#3a3a3a" stroke-width="1.35" stroke-linecap="butt"/><line x1="402.15" y1="95.7" x2="406.75" y2="95.7" stroke="#3a3a3a" stroke-width="1.35" stroke-linecap="butt"/><circle cx="404.45" cy="103.5" r="2.8" fill="#fff"/><rect x="377.05" y="110.1" width="31.95" height="3.7" rx="0.8" fill="#e8b25e"/></g>
<g transform="translate(-361.04062500000003 129.25000000000003) scale(0.8125)"><path d="M457.35,85.9 V84.4 Q457.35,82.4 459.35,82.4 H468.5 Q470.5,82.4 470.5,84.4 V85.9" fill="none" stroke="#6b6b6b" stroke-width="1.2"/><path d="M450.55,87.2 H477.5 Q480,87.2 480,89.7 V99 H448.05 V89.7 Q448.05,87.2 450.55,87.2 Z" fill="#4f2da8"/><path d="M448.05,101.05 H480 V110.35 Q480,112.85 477.5,112.85 H450.55 Q448.05,112.85 448.05,110.35 Z" fill="#4f2da8"/><rect x="460" y="95" width="7.9" height="10.9" rx="1.3" fill="#ffecb3"/><rect x="462" y="96.4" width="4" height="7.5" fill="#e8b25e"/></g>
<g transform="translate(-418.728125 161.40125) scale(0.8125)"><path d="M519.55,88 V110.2 Q519.55,112.35 521.7,112.35 H529.2 Q530.1,112.35 530.3,111.4 L530.6,110.3 Q530.9,109.35 532,109.35 H548 Q550.5,109.35 550.5,106.9 V88" fill="#fff" stroke="#6a6a6a" stroke-width="1"/><path d="M530.4,112.35 H536.4 Q537.2,112.35 537.5,111.5 L538.3,109.35 M537.6,112.35 H543.3 Q544.2,112.35 544.6,111.5 L545.6,109.35" fill="none" stroke="#6a6a6a" stroke-width="1"/><path d="M519.05,88.9 V86.3 Q519.05,84.06 521.3,84.06 H548.75 Q551,84.06 551,86.3 V88.9 Z" fill="#4f2da8"/><line x1="522.7" y1="91.1" x2="547.6" y2="91.1" stroke="#5c5c5c" stroke-width="1.6" stroke-linecap="round"/><line x1="522.6" y1="95.2" x2="529.3" y2="95.2" stroke="#b0b0b0" stroke-width="1.5" stroke-linecap="round"/><line x1="531.7" y1="95.2" x2="538.4" y2="95.2" stroke="#b0b0b0" stroke-width="1.5" stroke-linecap="round"/><line x1="540.9" y1="95.2" x2="547.6" y2="95.2" stroke="#4322a0" stroke-width="1.7" stroke-linecap="round"/><line x1="522.6" y1="98.9" x2="529.3" y2="98.9" stroke="#b0b0b0" stroke-width="1.5" stroke-linecap="round"/><line x1="531.7" y1="98.9" x2="538.4" y2="98.9" stroke="#b0b0b0" stroke-width="1.5" stroke-linecap="round"/><line x1="540.9" y1="98.9" x2="547.6" y2="98.9" stroke="#4322a0" stroke-width="1.7" stroke-linecap="round"/><line x1="522.6" y1="102.45" x2="529.3" y2="102.45" stroke="#b0b0b0" stroke-width="1.5" stroke-linecap="round"/><line x1="531.7" y1="102.45" x2="538.4" y2="102.45" stroke="#b0b0b0" stroke-width="1.5" stroke-linecap="round"/><line x1="540.9" y1="102.45" x2="547.6" y2="102.45" stroke="#4322a0" stroke-width="1.7" stroke-linecap="round"/></g></svg>
</aside>
<aside class="layer tree">
<div class="a" style="left:73px;top:235px;width:295px;height:34px;background:#ebebeb;border-radius:3px"></div>
<div class="a" style="left:378px;top:160px;width:1px;height:878px;background:#d8d8d8"></div>
<div class="a" style="left:379px;top:160px;width:1px;height:878px;background:#ececec"></div>
<svg class="ic" width="1757" height="1039" viewBox="0 0 1757 1039"><path d="M86.6,174.3 V172.9 Q86.6,171.7 87.8,171.7 H90.4 Q91.6,171.7 91.6,172.9 V174.3" fill="none" stroke="#a0a0a0" stroke-width="0.9"/><rect x="80.2" y="174.06" width="17.8" height="13.75" rx="1.5" fill="#4f2da8"/><rect x="80.2" y="180.1" width="17.8" height="1.5" fill="#8a72c8"/><ellipse cx="89.25" cy="181.05" rx="2.25" ry="2.85" fill="#e8b25e"/><ellipse cx="89.25" cy="181.05" rx="1.0" ry="1.7" fill="#f0c478"/>
<g transform="translate(-381.49465 150.18) scale(0.709)"><line x1="685.9" y1="89" x2="685.9" y2="101.9" stroke="#f3d9ae" stroke-width="1.4"/><line x1="692" y1="89" x2="692" y2="101.9" stroke="#f3d9ae" stroke-width="1.4"/><line x1="685.9" y1="88.3" x2="692" y2="88.3" stroke="#f3d9ae" stroke-width="1"/><polyline points="680.1,92.4 688.9,84.8 697.8,92.4" fill="none" stroke="#e8b25e" stroke-width="1.4"/><line x1="680.1" y1="92.8" x2="697.9" y2="92.8" stroke="#e8b25e" stroke-width="1.6"/><line x1="680.2" y1="91.8" x2="680.2" y2="101.9" stroke="#e8b25e" stroke-width="1.5"/><line x1="697.7" y1="91.8" x2="697.7" y2="101.9" stroke="#e8b25e" stroke-width="1.5"/><polyline points="676.7,91.3 688.85,80.0 701.1,91.3" fill="none" stroke="#4f2da8" stroke-width="1.85"/><line x1="677.9" y1="103.42" x2="700.1" y2="103.42" stroke="#6a6a6a" stroke-width="1.45"/></g>
<polygon points="121.29,246.17 126.65,246.17 126.89,250.66 120.05,256.21 115.93,252.33" fill="#e8b25e"/><circle cx="124.49" cy="247.46" r="0.6" fill="#fff"/><circle cx="124.49" cy="247.71" r="5.1" fill="none" stroke="#4a22a8" stroke-width="1.5"/><line x1="128.5" y1="251.9" x2="133.18" y2="256.83" stroke="#4a22a8" stroke-width="1.8" stroke-linecap="round"/>
<path d="M82.2,283.1 H95.1 L94.9,295.5 Q94.9,296.7 93.7,296.7 H83.6 Q82.4,296.7 82.4,295.5 Z" fill="#777"/><line x1="85.2" y1="285.9" x2="85.2" y2="293.9" stroke="#fff" stroke-width="0.9"/><line x1="87.7" y1="285.9" x2="87.7" y2="293.9" stroke="#fff" stroke-width="0.9"/><line x1="90.2" y1="285.9" x2="90.2" y2="293.9" stroke="#fff" stroke-width="0.9"/><line x1="92.5" y1="285.9" x2="92.5" y2="293.9" stroke="#fff" stroke-width="0.9"/><rect x="88.2" y="285.9" width="1.5" height="8" fill="#bdbdbd"/><line x1="82.2" y1="281.45" x2="95.6" y2="281.45" stroke="#4f2da8" stroke-width="2.1" stroke-linecap="round"/><rect x="87.1" y="279.1" width="3.4" height="1.6" rx="0.6" fill="#4f2da8"/>
<polyline points="50.8,180.9 54.56,184.3 58.3,180.9" fill="none" stroke="#000" stroke-width="1.4"/><polyline points="68.9,216.1 72.56,219.4 76.3,216.1" fill="none" stroke="#000" stroke-width="1.4"/><polyline points="52,287.2 55.8,290.5 52,293.8" fill="none" stroke="#000" stroke-width="1.4"/></svg>
<span class="t" style="left:104.36px;top:176px;font-size:11px;color:#111111;transform:scaleX(1.0382)">Мои сметы</span>
<span class="t" style="left:122.38px;top:211px;font-size:11px;color:#111111;transform:scaleX(1.0237)">Подготовительные работы</span>
<span class="t" style="left:140.36px;top:246px;font-size:11px;color:#111111;transform:scaleX(1.0378)">Конъюнктурный анализ</span>
<span class="t" style="left:104.37px;top:284px;font-size:11px;color:#111111;transform:scaleX(1.0293)">Корзина</span>
</aside>
<main class="layer content">
<div class="a" style="left:380px;top:190px;width:1376px;height:773px;background:#e6e6e6"></div>
<div class="layer doctabs">
<div class="a" style="left:494px;top:160px;width:135px;height:30px;background:#ffecb3;border-left:1px solid #d6cbe8;border-right:1px solid #d6cbe8"></div>
<div class="a" style="left:495px;top:160px;width:135px;height:4px;background:#ff9900"></div>
<svg width="1757" height="1039"><rect x="492" y="157" width="139.8" height="33.9" fill="none" stroke="#ff0000" stroke-width="3.4"/></svg>
<span class="t" style="left:403.5px;top:168px;font-size:14px;color:#424242;transform:scaleX(0.997)">Основные</span>
<span class="t" style="left:519.6px;top:168px;font-size:14px;color:#212121;transform:scaleX(0.9352);font-weight:700">Оформление</span>
</div>
<article class="card">
<div class="ul" style="left:48px;top:117px;width:785px"></div>
<div class="ul" style="left:378px;top:237px;width:455px"></div>
<div class="ul" style="left:378px;top:297px;width:455px"></div>
<div class="ul" style="left:378px;top:357px;width:455px"></div>
<span class="t" style="left:220.2px;top:46px;font-size:14px;color:#212121;transform:scaleX(0.95);font-weight:700">СВОДНАЯ ТАБЛИЦА РЕЗУЛЬТАТОВ КОНЪЮНКТУРНОГО АНАЛИЗА</span>
<span class="t" style="left:179.78px;top:94px;font-size:16px;color:#212121;transform:scaleX(1.022)">Корпус №1 Строительство жилого квартала, Конъюнктурный анализ</span>
<span class="t" style="left:288.0px;top:128px;font-size:12px;color:#212121;transform:scaleX(0.9534);font-style:italic">(наименование объекта капитального строительства)</span>
<span class="t" style="left:48.9px;top:215px;font-size:14px;color:#212121;transform:scaleX(0.9348);font-weight:700">Составил</span>
<span class="t" style="left:377.26px;top:214px;font-size:16px;color:#212121;transform:scaleX(1.0403)">Сметчик</span>
<span class="t" style="left:728.7px;top:214px;font-size:16px;color:#212121;transform:scaleX(0.9981)">Фамилия И.О.</span>
<span class="t" style="left:378.5px;top:244px;font-size:12px;color:#212121;transform:scaleX(1.0077);font-style:italic">(наименование должности)</span>
<span class="t" style="left:611.9px;top:244px;font-size:12px;color:#212121;transform:scaleX(0.9716);font-style:italic">(фамилия, имя, отчество (при наличии)</span>
<span class="t" style="left:47.95px;top:275px;font-size:14px;color:#212121;transform:scaleX(0.9456);font-weight:700">Проверил</span>
<span class="t" style="left:377.27px;top:274px;font-size:16px;color:#212121;transform:scaleX(1.0301)">Начальник сметного отдела</span>
<span class="t" style="left:728.7px;top:274px;font-size:16px;color:#212121;transform:scaleX(0.9981)">Фамилия И.О.</span>
<span class="t" style="left:378.5px;top:304px;font-size:12px;color:#212121;transform:scaleX(1.0077);font-style:italic">(наименование должности)</span>
<span class="t" style="left:611.9px;top:304px;font-size:12px;color:#212121;transform:scaleX(0.9716);font-style:italic">(фамилия, имя, отчество (при наличии)</span>
<span class="t" style="left:48.9px;top:335px;font-size:14px;color:#212121;transform:scaleX(0.981);font-weight:700">Застройщик (технический заказчик)</span>
<span class="t" style="left:378.3px;top:334px;font-size:16px;color:#212121;transform:scaleX(1.0561)">Заказчик</span>
<span class="t" style="left:728.7px;top:334px;font-size:16px;color:#212121;transform:scaleX(0.9981)">Фамилия И.О.</span>
<span class="t" style="left:378.5px;top:364px;font-size:12px;color:#212121;transform:scaleX(1.0077);font-style:italic">(наименование должности)</span>
<span class="t" style="left:611.9px;top:364px;font-size:12px;color:#212121;transform:scaleX(0.9716);font-style:italic">(фамилия, имя, отчество (при наличии)</span>
</article>
</main>
<footer class="layer footer">
<div class="hl" style="left:380px;top:963px;width:1376px"></div>
<button type="button" style="left:1557px;top:974px;width:190px;height:54px;background:#4f2ca4;border-radius:5px"><svg class="ic" width="1757" height="1039" viewBox="0 0 1757 1039" style="left:-1557px;top:-974px"><polygon points="1578.07,999.7 1573.96,1004.06 1579.55,1010.41 1584,1005.84" fill="#fff" stroke="#fff" stroke-width="0.6" stroke-linejoin="round"/><circle cx="1586.33" cy="997.15" r="8.4" fill="#4f2ca6"/><circle cx="1586.33" cy="997.15" r="7.0" fill="none" stroke="#fff" stroke-width="2.8"/><rect x="1581.46" y="993.77" width="7.8" height="8.7" rx="2.2" fill="#fff"/><circle cx="1586.63" cy="996.73" r="0.8" fill="#4f2ca6"/><line x1="1592.26" y1="1003.93" x2="1599.25" y2="1011.26" stroke="#fff" stroke-width="3" stroke-linecap="round"/></svg><span class="t" style="left:55.62px;top:16px;font-size:22px;color:#ffffff;transform:scaleX(0.9849)">Открыть КА</span></button>
</footer>
<div class="a" style="left:0;top:0;width:1755px;height:1037px;border:1px solid #767676;pointer-events:none"></div>
</body></html>
